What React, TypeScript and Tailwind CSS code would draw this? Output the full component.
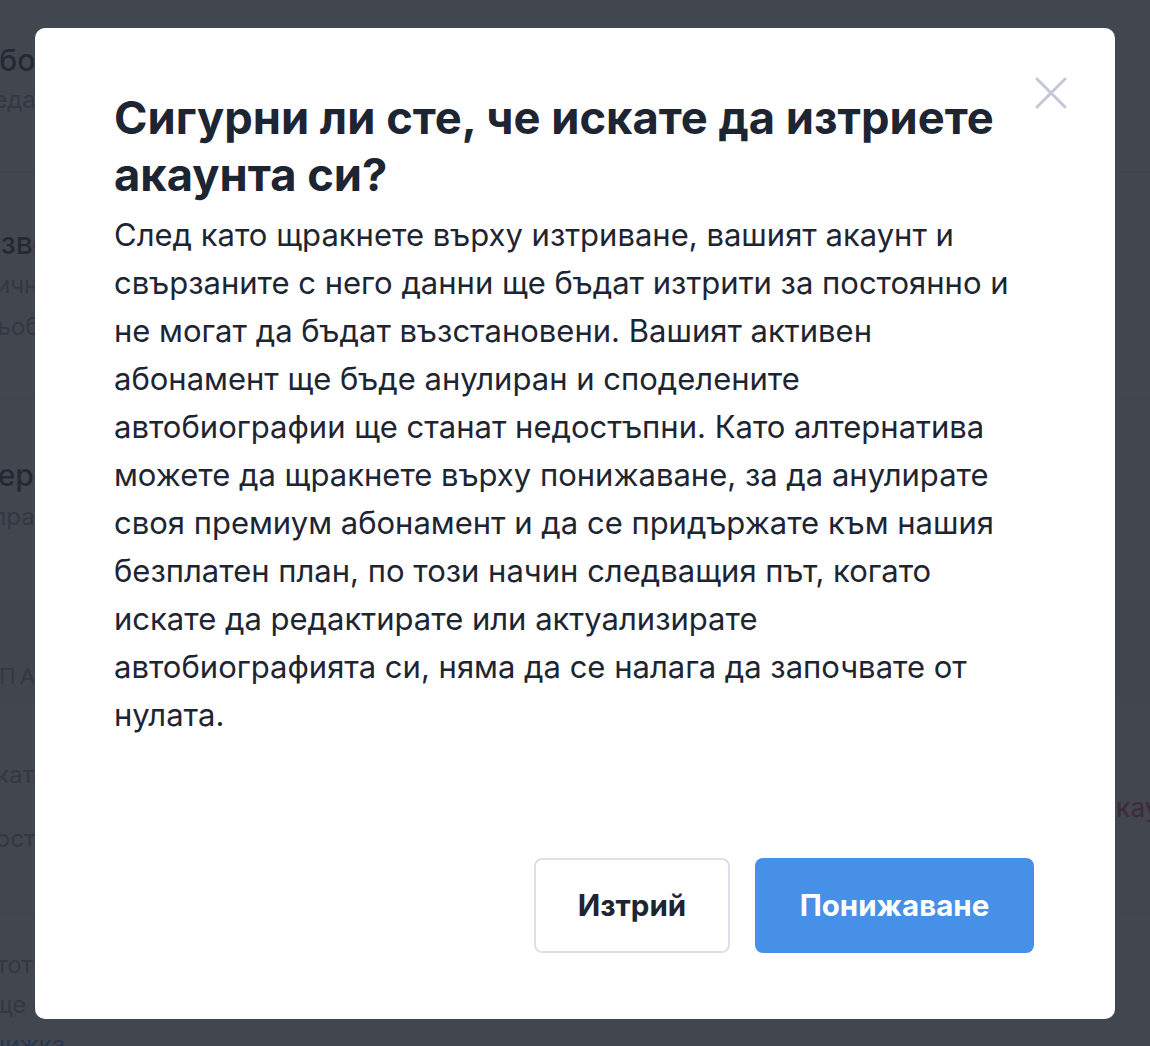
import React from 'react'

const font = { fontFamily: 'Inter, "Noto Sans", sans-serif' }

const bodyLines = [
  'След като щракнете върху изтриване, вашият акаунт и',
  'свързаните с него данни ще бъдат изтрити за постоянно и',
  'не могат да бъдат възстановени. Вашият активен',
  'абонамент ще бъде анулиран и споделените',
  'автобиографии ще станат недостъпни. Като алтернатива',
  'можете да щракнете върху понижаване, за да анулирате',
  'своя премиум абонамент и да се придържате към нашия',
  'безплатен план, по този начин следващия път, когато',
  'искате да редактирате или актуализирате',
  'автобиографията си, няма да се налага да започвате от',
  'нулата.',
]

function BackgroundPage() {
  return (
    <div className="h-[1046px] w-full overflow-hidden bg-white text-[#1e2532]">
      <div className="-ml-[22px] w-[1300px]">
        <div className="h-[172px] border-b border-[#e5e7ee] pt-[40px]">
          <div className="text-[30px] font-medium leading-[40px]">Абонамент</div>
          <div className="text-[24px] leading-[40px] text-[#8a90a0]">Редактирайте плана си</div>
        </div>
        <div className="h-[226px] border-b border-[#e5e7ee] pt-[50px]">
          <div className="text-[30px] font-medium leading-[42px]">Известия</div>
          <div className="text-[24px] leading-[42px] text-[#8a90a0]">Лични известия</div>
          <div className="text-[24px] leading-[42px] text-[#8a90a0]">Съобщения</div>
        </div>
        <div className="h-[202px] pt-[56px]">
          <div className="text-[30px] font-medium leading-[42px]">Версия</div>
          <div className="text-[24px] leading-[42px] text-[#8a90a0]">Управлявайте</div>
        </div>
        <div className="h-[100px] bg-[#f5f6f9] pt-[56px]">
          <div className="text-[22px] uppercase leading-[40px] tracking-[0.2em] text-[#8a90a0]">Опасна зона</div>
        </div>
        <div className="flex h-[215px] items-center justify-between border-b border-[#e5e7ee] pr-[90px]">
          <div className="text-[24px] leading-[64px] text-[#8a90a0]">
            <div>Икате</div>
            <div>Постоянно</div>
          </div>
          <div className="text-[26px] font-medium text-[#e0425b]">Изтриване на акаунт</div>
        </div>
        <div className="pt-[30px] text-[24px] leading-[40px] text-[#8a90a0]">
          <div className="pl-[4px]">ототговор</div>
          <div>още от</div>
          <div className="text-[#2f80ed]">книжка</div>
        </div>
      </div>
    </div>
  )
}

function CloseIcon() {
  return (
    <svg width="32" height="32" viewBox="0 0 32 32" fill="none">
      <path d="M2 2L30 30M30 2L2 30" stroke="#c4c8d6" strokeWidth="3" strokeLinecap="round" />
    </svg>
  )
}

export default function App() {
  return (
    <div className="relative" style={font}>
      <BackgroundPage />

      <div className="fixed inset-0 flex items-center justify-center bg-[#262a34]/[0.87]">
        <div className="relative w-[1080px] rounded-[10px] bg-white pb-[66px] pl-[79px] pr-[81px] pt-[61px] text-[#1e2532]">
          <button className="absolute right-[48px] top-[49px]">
            <CloseIcon />
          </button>

          <h2 className="pr-[40px] text-[45.3px] font-bold leading-[57px]">
            Сигурни ли сте, че искате да изтриете акаунта си?
          </h2>
          <p className="mt-[8px] whitespace-nowrap text-[31px] leading-[48px]">
            {bodyLines.map((line, i) => (
              <React.Fragment key={i}>
                {line}
                {i < bodyLines.length - 1 && <br />}
              </React.Fragment>
            ))}
          </p>

          <div className="mt-[119px] flex justify-end gap-[25px]">
            <button className="h-[95px] w-[196px] rounded-[8px] border-2 border-[#dde0ea] bg-white text-[29.5px] font-bold text-[#1e2532]">
              Изтрий
            </button>
            <button className="h-[95px] w-[279px] rounded-[8px] bg-[#4690e8] text-[29.5px] font-bold text-white">
              Понижаване
            </button>
          </div>
        </div>
      </div>
    </div>
  )
}
